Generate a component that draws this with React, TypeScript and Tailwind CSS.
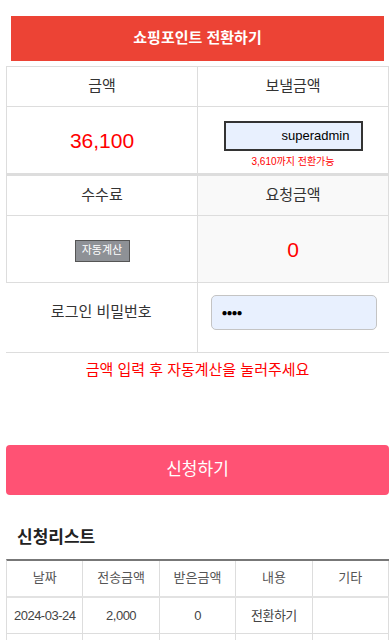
import React from "react";

const font = { fontFamily: '"Liberation Sans", "Noto Sans CJK KR", sans-serif' };

export default function App() {
  return (
    <div className="bg-white min-h-[640px] pl-[6px] pr-[3px] pt-[16px] text-[#333]" style={font}>
      <div className="mx-[5px] h-[45px] bg-[#ec4335] flex items-center justify-center text-white text-[15px] font-bold">
        쇼핑포인트 전환하기
      </div>
      <ExchangeTable />
      <PasswordRow />
      <p className="text-center text-[15px] text-[#ff0000] mt-[6px]">금액 입력 후 자동계산을 눌러주세요</p>
      <button className="mt-[63px] w-full h-[50px] rounded-[4px] bg-[#ff5274] text-white text-[17px]">신청하기</button>
      <h3 className="mt-[30px] pl-[11px] text-[17px] font-bold text-[#222]">신청리스트</h3>
      <HistoryTable />
    </div>
  );
}

function ExchangeTable() {
  const cell = "border-r border-b border-[#ddd] flex items-center justify-center";
  return (
    <div className="mt-[5px]">
      <div className="grid grid-cols-2 border-l border-t border-[#ddd]">
        <div className={`${cell} h-[40px] text-[15px]`}>금액</div>
        <div className={`${cell} h-[40px] text-[15px]`}>보낼금액</div>
        <div className={`${cell} h-[67px] text-[21px] text-[#ff0000] pt-[2px]`}>36,100</div>
        <div className={`${cell} h-[67px] flex-col pt-[10px]`}>
          <div className="w-[139px] h-[30px] border-2 border-[#333] bg-[#e8f0fe] flex items-center justify-end pr-[11px] text-[13px] text-black">
            superadmin
          </div>
          <div className="text-[10px] text-[#ff0000] mt-[4px] leading-[14px]">3,610까지 전환가능</div>
        </div>
      </div>
      <div className="grid grid-cols-2 border-l border-t-2 border-[#ddd]">
        <div className={`${cell} h-[40px] text-[15px]`}>수수료</div>
        <div className={`${cell} h-[40px] text-[15px] bg-[#f9f9f9]`}>요청금액</div>
        <div className={`${cell} h-[67px]`}>
          <span className="mt-[3px] w-[55px] h-[22px] bg-[#8e9196] border border-[#555] text-white text-[11px] flex items-center justify-center">
            자동계산
          </span>
        </div>
        <div className={`${cell} h-[67px] bg-[#f9f9f9] text-[21px] text-[#ff0000] pt-[2px]`}>0</div>
      </div>
    </div>
  );
}

function PasswordRow() {
  return (
    <div className="grid grid-cols-2 border-b border-[#ddd] h-[70px]">
      <div className="flex items-center justify-center text-[15px] border-r border-[#ddd] pb-[10px]">로그인 비밀번호</div>
      <div className="flex items-center pl-[13px] pr-[12px] pb-[10px]">
        <div className="w-full h-[35px] rounded-[5px] border border-[#c4c4c4] bg-[#e8f0fe] flex items-center pl-[10px] text-[10px] text-black tracking-[-1px]">
          ●●●●
        </div>
      </div>
    </div>
  );
}

function HistoryTable() {
  const heads = ["날짜", "전송금액", "받은금액", "내용", "기타"];
  const rows = [
    ["2024-03-24", "2,000", "0", "전환하기", ""],
    ["", "", "", "", ""],
  ];
  return (
    <div className="mt-[9px] border-t-2 border-l border-[#ddd]" style={{ borderTopColor: "#777" }}>
      <div className="grid grid-cols-5 border-b-2 border-[#e2e2e2]">
        {heads.map((h) => (
          <div key={h} className="h-[35px] border-r border-[#ddd] flex items-center justify-center text-[13px] text-[#555] pb-[2px]">
            {h}
          </div>
        ))}
      </div>
      {rows.map((r, i) => (
        <div key={i} className="grid grid-cols-5 border-b border-[#ddd]">
          {r.map((c, j) => (
            <div key={j} className="h-[35px] border-r border-[#ddd] flex items-center justify-center text-[13px] text-[#444] tracking-[-0.5px]">
              {c}
            </div>
          ))}
        </div>
      ))}
    </div>
  );
}
